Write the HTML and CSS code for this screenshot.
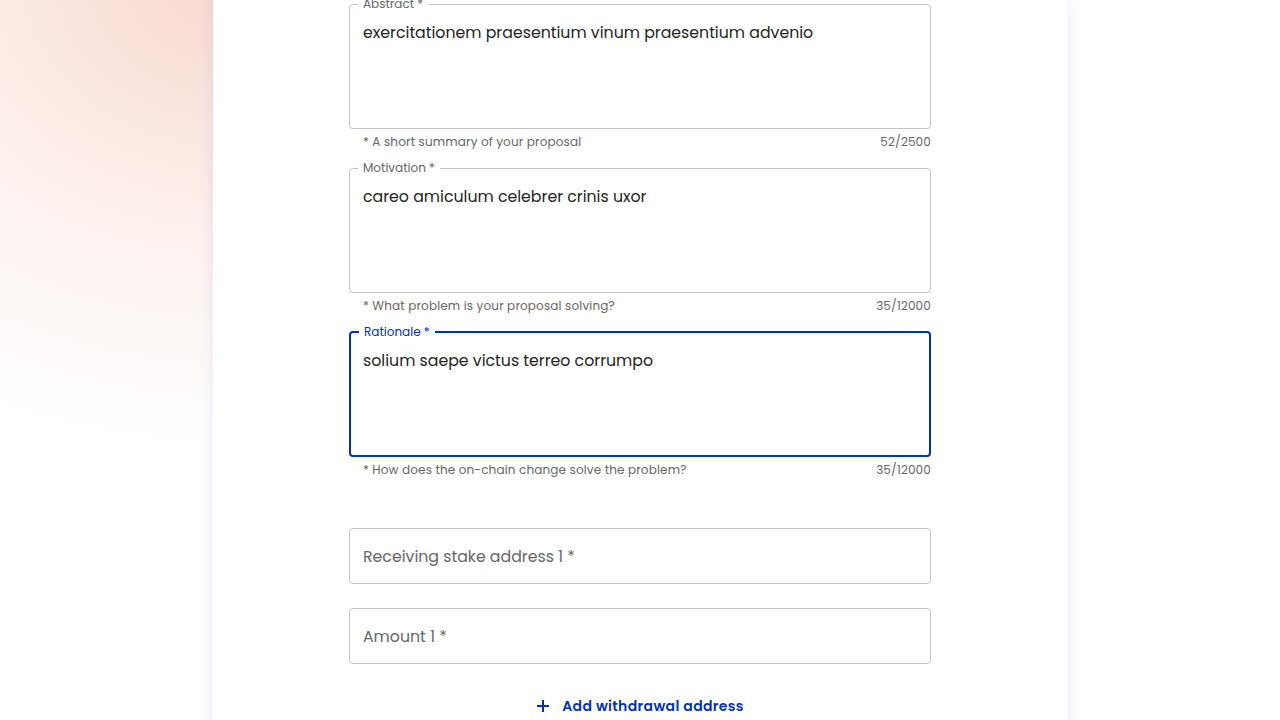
FILE: index.html
```html
<!DOCTYPE html>
<html lang="en">
<head>
<meta charset="utf-8">
<title>Governance action</title>
<link rel="stylesheet" href="styles.css">
</head>
<body>
<div class="page">
  <main class="card">
    <div class="form">
      <div class="group">
        <fieldset class="area">
          <legend>Abstract *</legend>
          <div class="value">exercitationem praesentium vinum praesentium advenio</div>
        </fieldset>
        <div class="helper"><span>* A short summary of your proposal</span><span>52/2500</span></div>
      </div>
      <div class="group">
        <fieldset class="area">
          <legend>Motivation *</legend>
          <div class="value">careo amiculum celebrer crinis uxor</div>
        </fieldset>
        <div class="helper"><span>* What problem is your proposal solving?</span><span>35/12000</span></div>
      </div>
      <div class="group">
        <fieldset class="area focused">
          <legend>Rationale *</legend>
          <div class="value">solium saepe victus terreo corrumpo</div>
        </fieldset>
        <div class="helper"><span>* How does the on-chain change solve the problem?</span><span>35/12000</span></div>
      </div>
      <div class="inputs">
        <div class="input">Receiving stake address 1 *</div>
        <div class="input">Amount 1 *</div>
      </div>
      <button class="add" type="button">
        <svg width="14" height="14" viewBox="0 0 14 14" aria-hidden="true"><path d="M7 1v12M1 7h12" stroke="currentColor" stroke-width="2" fill="none"/></svg>
        <span>Add withdrawal address</span>
      </button>
    </div>
  </main>
</div>
</body>
</html>
```

FILE: styles.css
```css
* { box-sizing: border-box; }
html, body { margin: 0; height: 100%; }
body {
  font-family: Poppins, "Open Sans", "DejaVu Sans", sans-serif;
  color: #242424;
  background: #fff;
  overflow: hidden;
}
.page {
  min-height: 100%;
  background:
    radial-gradient(ellipse 580px 470px at 230px -20px, rgba(248, 214, 204, 0.95), rgba(252, 234, 228, 0.65) 55%, rgba(255, 255, 255, 0) 100%),
    #fff;
}
.card {
  width: 854px;
  height: 760px;
  margin: 0 auto;
  background: #fff;
  box-shadow: 0 0 14px rgba(82, 100, 210, 0.13);
  padding: 0 136px;
}
.form {
  display: flex;
  flex-direction: column;
  margin-top: -2px;
}
.group {
  display: flex;
  flex-direction: column;
  margin-bottom: 10px;
}
.area {
  margin: 0;
  min-width: 0;
  border: 1px solid #c4c4c4;
  border-radius: 4px;
  padding: 10px 13px 16px;
  height: 131px;
}
.area legend {
  margin-left: -5px;
  padding: 0 5px;
  font-size: 12px;
  line-height: 12px;
  color: #666;
}
.area .value {
  font-size: 15.75px;
  line-height: 23px;
  height: 92px;
  padding-top: 1px;
}
.area.focused {
  border: 2px solid #0033ad;
  padding: 10px 12px 15px;
}
.area.focused legend {
  color: #0033ad;
  margin-left: -4px;
}
.helper {
  display: flex;
  justify-content: space-between;
  margin-top: 3px;
  padding-left: 14px;
  font-size: 12px;
  line-height: 20px;
  letter-spacing: 0.15px;
  color: #666;
}
.inputs {
  display: flex;
  flex-direction: column;
  gap: 24px;
  margin-top: 38px;
}
.input {
  height: 56px;
  border: 1px solid #c4c4c4;
  border-radius: 4px;
  padding: 16px 13px;
  font-size: 15.75px;
  line-height: 23px;
  color: #666;
}
.add {
  align-self: center;
  margin-top: 24px;
  display: flex;
  align-items: center;
  gap: 12px;
  height: 36px;
  padding: 0 8px;
  border: 0;
  background: none;
  font-family: inherit;
  font-size: 14px;
  font-weight: 600;
  color: #0033ad;
  letter-spacing: 0.35px;
}
.add svg { display: block; }
```
